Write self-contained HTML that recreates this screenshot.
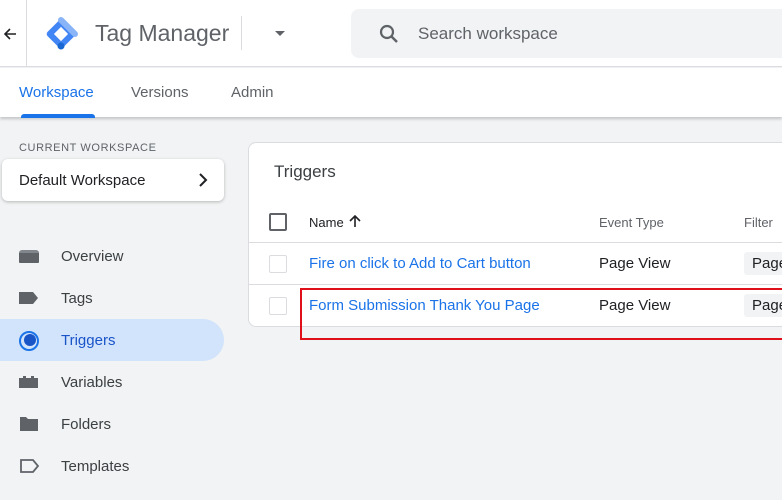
<!DOCTYPE html>
<html><head><style>
*{margin:0;padding:0;box-sizing:border-box}
body{width:782px;height:500px;overflow:hidden;background:#f1f3f4;font-family:"Liberation Sans",Arial,sans-serif;position:relative;color:#3c4043}
.a{position:absolute}
</style></head><body>
<div class="a" style="left:0;top:0;width:782px;height:67px;background:#fff;border-bottom:1px solid #dadce0"></div>
<svg class="a" style="left:3px;top:27px" width="14" height="14" viewBox="0 0 14 14"><path d="M13 7 H2 M7 2 L2 7 L7 12" fill="none" stroke="#202124" stroke-width="1.6"/></svg>
<div class="a" style="left:26px;top:0;width:1px;height:67px;background:#dadce0"></div>
<svg class="a" style="left:44px;top:17px" width="34" height="34" viewBox="0 0 34 34">
<rect x="6" y="6" width="22" height="22" transform="rotate(45 17 17)" rx="3" fill="#4285f4"/>
<rect x="12" y="12" width="10" height="10" transform="rotate(45 17 17)" fill="#fff"/>
<path d="M17 3 L31 17" stroke="#8ab4f8" stroke-width="6" stroke-linecap="round"/>
<circle cx="17" cy="29" r="3.5" fill="#1967d2"/>
</svg>
<div class="a" style="left:95px;top:20px;font-size:23px;color:#5f6368">Tag Manager</div>
<div class="a" style="left:241px;top:16px;width:1px;height:34px;background:#dadce0"></div>
<div class="a" style="left:275px;top:31px;width:0;height:0;border-left:5px solid transparent;border-right:5px solid transparent;border-top:5px solid #5f6368"></div>
<div class="a" style="left:351px;top:9px;width:440px;height:49px;background:#f1f3f4;border-radius:8px"></div>
<svg class="a" style="left:378px;top:23px" width="22" height="22" viewBox="0 0 22 22"><circle cx="9" cy="9" r="6" fill="none" stroke="#5f6368" stroke-width="2.2"/><path d="M13.5 13.5 L19 19" stroke="#5f6368" stroke-width="2.5"/></svg>
<div class="a" style="left:418px;top:24px;font-size:17px;color:#5f6368">Search workspace</div>
<div class="a" style="left:0;top:68px;width:782px;height:49px;background:#fff;box-shadow:0 2px 3px rgba(0,0,0,.2)"></div>
<div class="a" style="left:19px;top:84px;font-size:15px;color:#1a73e8">Workspace</div>
<div class="a" style="left:21px;top:114px;width:74px;height:4px;background:#1a73e8;border-radius:3px 3px 0 0"></div>
<div class="a" style="left:131px;top:84px;font-size:15px;color:#5f6368">Versions</div>
<div class="a" style="left:231px;top:84px;font-size:15px;color:#5f6368">Admin</div>
<div class="a" style="left:19px;top:142px;font-size:11px;letter-spacing:.6px;color:#5f6368">CURRENT WORKSPACE</div>
<div class="a" style="left:2px;top:159px;width:222px;height:42px;background:#fff;border-radius:6px;box-shadow:0 1px 3px rgba(0,0,0,.25)"></div>
<div class="a" style="left:19px;top:172px;font-size:15px;color:#202124">Default Workspace</div>
<svg class="a" style="left:197px;top:173px" width="12" height="14"><path d="M3 1 L9 7 L3 13" fill="none" stroke="#202124" stroke-width="2"/></svg>
<div class="a" style="left:0;top:319px;width:224px;height:42px;background:#d2e3fc;border-radius:0 21px 21px 0"></div>
<div class="a" style="left:19px;top:250px;width:20px;height:13px;background:#5f6368;border-radius:3px 3px 1px 1px;border-top:3px solid #80868b"></div>
<svg class="a" style="left:18px;top:291px" width="22" height="14"><path d="M1 1 H15 L20 7 L15 13 H1 Z" fill="#5f6368"/></svg>
<svg class="a" style="left:18px;top:330px" width="22" height="22"><circle cx="11" cy="11" r="9" fill="none" stroke="#1a73e8" stroke-width="2"/><circle cx="12" cy="10" r="6" fill="#1a55c8"/></svg>
<svg class="a" style="left:18px;top:375px" width="22" height="14"><path d="M1 3 H5 V1 H8 V3 H13 V1 H16 V3 H20 V13 H1 Z" fill="#5f6368"/></svg>
<svg class="a" style="left:19px;top:416px" width="22" height="16"><path d="M1 1 H7 L9 3 H19 V15 H1 Z" fill="#5f6368"/></svg>
<svg class="a" style="left:19px;top:459px" width="22" height="14"><path d="M2 1 H14 L19 7 L14 13 H2 Z" fill="none" stroke="#5f6368" stroke-width="1.8"/></svg>
<div class="a" style="left:61px;top:248px;font-size:15px;color:#3c4043">Overview</div>
<div class="a" style="left:61px;top:290px;font-size:15px;color:#3c4043">Tags</div>
<div class="a" style="left:61px;top:332px;font-size:15px;color:#1a55c8">Triggers</div>
<div class="a" style="left:61px;top:374px;font-size:15px;color:#3c4043">Variables</div>
<div class="a" style="left:61px;top:416px;font-size:15px;color:#3c4043">Folders</div>
<div class="a" style="left:61px;top:458px;font-size:15px;color:#3c4043">Templates</div>
<div class="a" style="left:248px;top:142px;width:560px;height:185px;background:#fff;border:1px solid #dadce0;border-radius:8px"></div>
<div class="a" style="left:274px;top:162px;font-size:17px;color:#3c4043">Triggers</div>
<div class="a" style="left:269px;top:213px;width:18px;height:18px;border:2px solid #5f6368;border-radius:2px"></div>
<div class="a" style="left:309px;top:215px;font-size:13px;color:#202124">Name</div>
<svg class="a" style="left:348px;top:214px" width="14" height="14"><path d="M7 13 V2 M2 7 L7 2 L12 7" fill="none" stroke="#202124" stroke-width="1.6"/></svg>
<div class="a" style="left:599px;top:215px;font-size:13px;color:#5f6368">Event Type</div>
<div class="a" style="left:744px;top:215px;font-size:13px;color:#5f6368">Filter</div>
<div class="a" style="left:249px;top:242px;width:533px;height:1px;background:#dadce0"></div>
<div class="a" style="left:249px;top:284px;width:533px;height:1px;background:#dadce0"></div>
<div class="a" style="left:269px;top:255px;width:18px;height:18px;border:1.5px solid #dadce0;border-radius:2px"></div>
<div class="a" style="left:269px;top:297px;width:18px;height:18px;border:1.5px solid #dadce0;border-radius:2px"></div>
<div class="a" style="left:309px;top:255px;font-size:15px;color:#1a73e8">Fire on click to Add to Cart button</div>
<div class="a" style="left:309px;top:297px;font-size:15px;color:#1a73e8">Form Submission Thank You Page</div>
<div class="a" style="left:599px;top:255px;font-size:15px;color:#202124">Page View</div>
<div class="a" style="left:599px;top:297px;font-size:15px;color:#202124">Page View</div>
<div class="a" style="left:744px;top:252px;width:50px;height:23px;background:#f1f3f4;border-radius:3px;padding:3px 0 0 8px;font-size:15px;color:#202124">Page</div>
<div class="a" style="left:744px;top:294px;width:50px;height:23px;background:#f1f3f4;border-radius:3px;padding:3px 0 0 8px;font-size:15px;color:#202124">Page</div>
<div class="a" style="left:300px;top:288px;width:500px;height:52px;border:2px solid #e0101a"></div>
</body></html>
